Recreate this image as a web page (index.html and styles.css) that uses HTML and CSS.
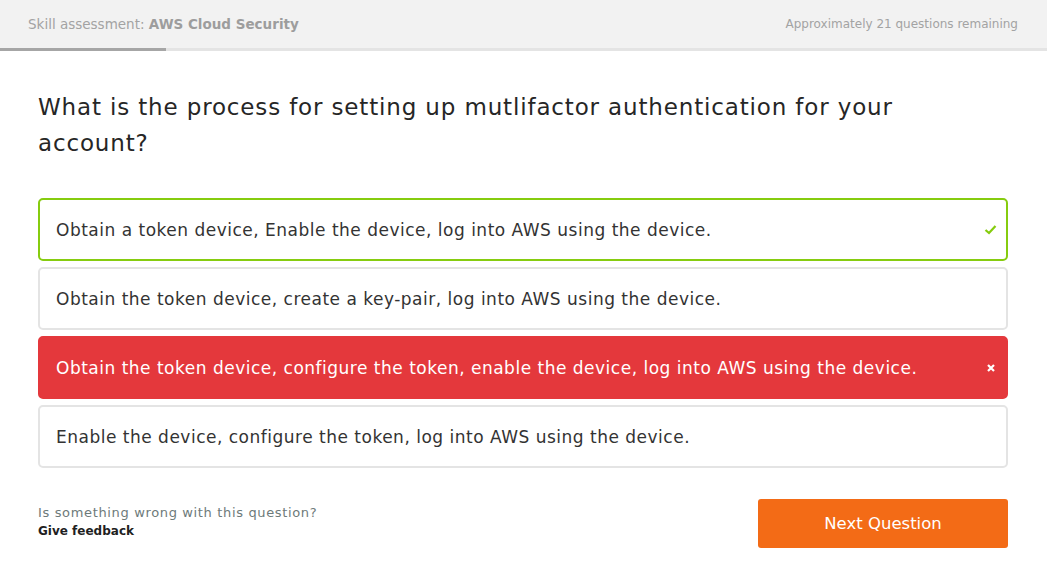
FILE: index.html
```html
<!DOCTYPE html>
<html lang="en">
<head>
<meta charset="utf-8">
<title>Skill assessment: AWS Cloud Security</title>
<link rel="stylesheet" href="styles.css">
</head>
<body>
<header class="topbar">
  <div class="topbar-inner">
    <div class="title">Skill assessment: <strong>AWS Cloud Security</strong></div>
    <div class="remaining">Approximately 21 questions remaining</div>
  </div>
  <div class="progress"><div class="progress-fill" style="width:166px"></div></div>
</header>
<main class="content">
  <h1 class="question">What is the process for setting up mutlifactor authentication for your account?</h1>
  <ul class="options">
    <li class="option correct">
      <span>Obtain a token device, Enable the device, log into AWS using the device.</span>
      <svg class="mark" width="13" height="11" viewBox="0 0 13 11"><path d="M1.5 6 L5 9 L11.5 2" fill="none" stroke="#85cc0e" stroke-width="2.2"/></svg>
    </li>
    <li class="option">
      <span>Obtain the token device, create a key-pair, log into AWS using the device.</span>
    </li>
    <li class="option wrong">
      <span>Obtain the token device, configure the token, enable the device, log into AWS using the device.</span>
      <svg class="mark" width="10" height="10" viewBox="0 0 10 10"><path d="M2 2 L8 8 M8 2 L2 8" fill="none" stroke="#fff" stroke-width="2.2"/></svg>
    </li>
    <li class="option">
      <span>Enable the device, configure the token, log into AWS using the device.</span>
    </li>
  </ul>
  <div class="footer">
    <div class="feedback">
      <div class="feedback-q">Is something wrong with this question?</div>
      <div class="feedback-link">Give feedback</div>
    </div>
    <button class="next">Next Question</button>
  </div>
</main>
</body>
</html>
```
FILE: styles.css
```css
* { box-sizing: border-box; }
body {
  margin: 0;
  background: #fff;
  font-family: "DejaVu Sans", "Open Sans", sans-serif;
  color: #2b2b2b;
}
.topbar { background: #f2f2f2; }
.topbar-inner {
  height: 48px;
  display: flex;
  align-items: center;
  justify-content: space-between;
  padding: 0 29px 0 28px;
}
.title { font-size: 13.5px; color: #a3a3a3; }
.title strong { font-weight: 700; color: #9d9d9d; }
.remaining { font-size: 12px; color: #a3a3a3; }
.progress { height: 3px; background: #e4e4e4; }
.progress-fill { height: 3px; background: #a6a6a6; }
.content { padding: 38px 39px 0 38px; }
.question {
  margin: 0 0 37px;
  font-size: 23px;
  letter-spacing: 0.85px;
  line-height: 36px;
  font-weight: 400;
  color: #262626;
  max-width: 890px;
}
.options {
  list-style: none;
  margin: 0;
  padding: 0;
  display: flex;
  flex-direction: column;
  gap: 6px;
}
.option {
  height: 63px;
  border: 2px solid #e4e4e4;
  border-radius: 5px;
  display: flex;
  align-items: center;
  justify-content: space-between;
  padding: 0 9px 0 16px;
  font-size: 17px;
  letter-spacing: 0.5px;
  color: #333;
}
.option.correct { border-color: #86cc0f; }
.option.wrong { background: #e4383c; border-color: #e4383c; color: #fff; padding-right: 10px; }
.mark { display: block; }
.footer {
  margin-top: 31px;
  display: flex;
  justify-content: space-between;
  align-items: flex-start;
}
.feedback { padding-top: 4px; font-size: 13px; line-height: 19px; }
.feedback-q { color: #6d7a7a; letter-spacing: 0.65px; }
.feedback-link { color: #1f1f1f; font-weight: 700; font-size: 12px; }
.next {
  width: 250px;
  height: 49px;
  border: 0;
  border-radius: 3px;
  background: #f36b16;
  color: #fff;
  font-family: inherit;
  font-size: 16.5px;
}
```
